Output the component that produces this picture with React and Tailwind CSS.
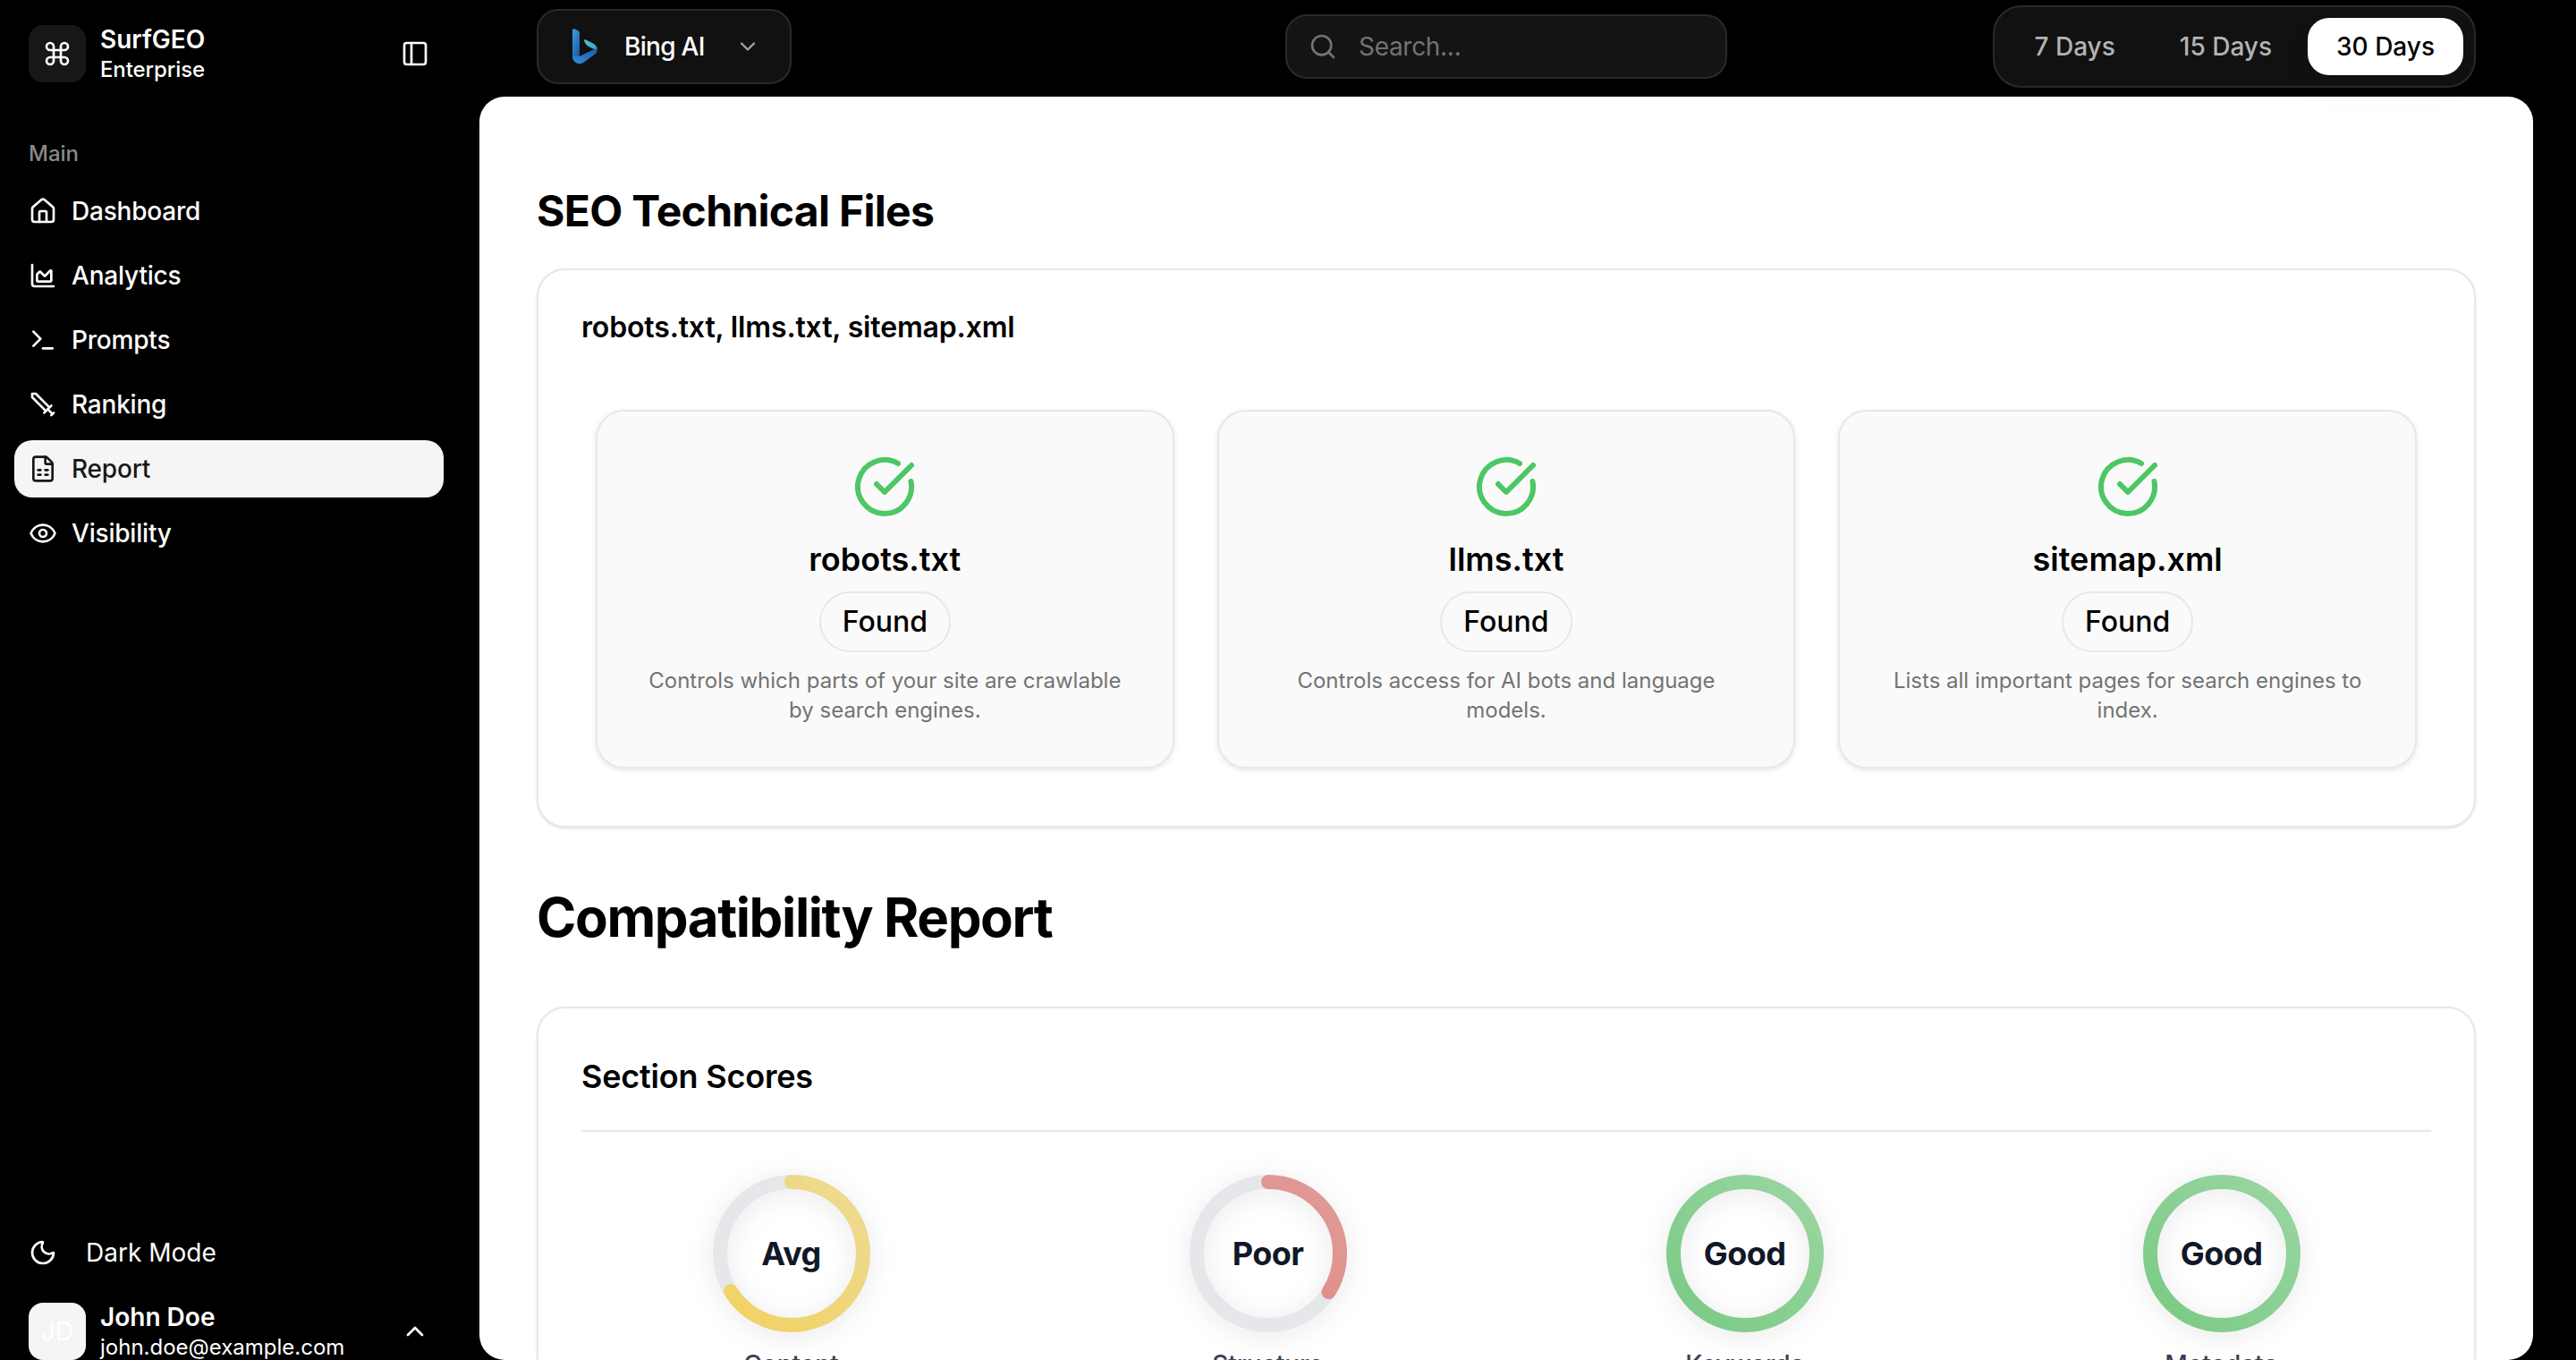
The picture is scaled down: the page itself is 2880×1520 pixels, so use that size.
import {
  Command,
  PanelLeft,
  House,
  ChartArea,
  Terminal,
  FileSpreadsheet,
  Eye,
  Moon,
  ChevronUp,
  ChevronDown,
  Search,
  CircleCheckBig,
} from "lucide-react";

function SwordIcon({ size = 32 }) {
  return (
    <svg width={size} height={size} viewBox="0 0 24 24" fill="none" stroke="currentColor" strokeWidth="2" strokeLinecap="round" strokeLinejoin="round">
      <polyline points="14.5 17.5 3 6 3 3 6 3 17.5 14.5" />
      <line x1="13" x2="19" y1="19" y2="13" />
      <line x1="16" x2="20" y1="16" y2="20" />
      <line x1="19" x2="21" y1="21" y2="19" />
    </svg>
  );
}

const navItems = [
  { label: "Dashboard", icon: House },
  { label: "Analytics", icon: ChartArea },
  { label: "Prompts", icon: Terminal },
  { label: "Ranking", icon: SwordIcon },
  { label: "Report", icon: FileSpreadsheet, active: true },
  { label: "Visibility", icon: Eye },
];

const files = [
  { name: "robots.txt", text: "Controls which parts of your site are crawlable by search engines." },
  { name: "llms.txt", text: "Controls access for AI bots and language models." },
  { name: "sitemap.xml", text: "Lists all important pages for search engines to index." },
];

const scores = [
  { id: "content", label: "Content", status: "Avg", pct: 66, from: "#eeda90", to: "#f1d264" },
  { id: "structure", label: "Structure", status: "Poor", pct: 34, from: "#e09a96", to: "#e08480" },
  { id: "keywords", label: "Keywords", status: "Good", pct: 100, from: "#98d5a0", to: "#7ccb86" },
  { id: "metadata", label: "Metadata", status: "Good", pct: 100, from: "#98d5a0", to: "#7ccb86" },
];

function BingLogo() {
  return (
    <svg width="28" height="40" viewBox="0 0 28 40">
      <defs>
        <linearGradient id="bingStem" x1="0" y1="0" x2="0.6" y2="1">
          <stop offset="0" stopColor="#37a0dc" />
          <stop offset="0.7" stopColor="#2a72bc" />
          <stop offset="1" stopColor="#1f5aa6" />
        </linearGradient>
        <linearGradient id="bingRibbon" x1="0" y1="1" x2="1" y2="0">
          <stop offset="0" stopColor="#2f8fd6" />
          <stop offset="1" stopColor="#1f5aa6" />
        </linearGradient>
        <linearGradient id="bingLobe" x1="0" y1="0" x2="1" y2="1">
          <stop offset="0" stopColor="#58c4c8" />
          <stop offset="1" stopColor="#2f9fd0" />
        </linearGradient>
      </defs>
      <path d="M13 13 C13 12 14 12 15 12.500 L23 16.500 C26.500 18.500 28 21 27.500 24.500 L19 20.500 C16 19 14 17 13 13 Z" fill="url(#bingLobe)" />
      <path d="M0 2 C0 0.500 1 0 2.500 0.500 L5.500 1.700 C7.200 2.400 8 3.500 8 5.200 L8 32 L0 33 Z" fill="url(#bingStem)" />
      <path d="M8 31 L24 23 C26 22 27.800 23 27.500 25 C27 27 26 28 24.500 29 L13 37.500 C8 41 2 38.500 0.500 34 C0 32.500 0 31 0 30 L8 31 Z" fill="url(#bingRibbon)" />
    </svg>
  );
}

function ScoreRing({ id, label, status, pct, from, to }) {
  const r = 80;
  const circ = 2 * Math.PI * r;
  return (
    <div className="flex flex-col items-center gap-4">
      <div className="relative w-[176px] h-[176px]">
        <div className="drop-shadow-[0_4px_14px_rgba(0,0,0,0.1)]">
          <svg width="176" height="176" viewBox="0 0 176 176" className="-rotate-90">
            <defs>
              <linearGradient id={id} gradientUnits="userSpaceOnUse" x1="20" y1="20" x2="156" y2="156">
                <stop offset="0" stopColor={to} />
                <stop offset="1" stopColor={from} />
              </linearGradient>
            </defs>
            <circle cx="88" cy="88" r={r} fill="none" stroke="#e5e7eb" strokeWidth="16" />
            <circle
              cx="88"
              cy="88"
              r={r}
              fill="none"
              stroke={`url(#${id})`}
              strokeWidth="16"
              strokeLinecap="round"
              strokeDasharray={`${(circ * pct) / 100} ${circ}`}
            />
          </svg>
        </div>
        <div className="absolute inset-0 flex items-center justify-center text-[36px] font-bold tracking-[-0.6px] text-[#111827]">
          {status}
        </div>
      </div>
      <div className="text-[28px] leading-10 font-medium text-[#374151]">{label}</div>
    </div>
  );
}

export default function App() {
  return (
    <div className="h-screen w-full flex bg-black overflow-hidden font-['Inter',sans-serif] text-white">
      {/* sidebar */}
      <aside className="w-[536px] shrink-0 flex flex-col pr-6">
        <div className="h-[92px] flex items-center justify-between pl-8 pr-8 pt-7">
          <div className="flex items-center gap-4">
            <div className="w-16 h-16 rounded-2xl bg-[#171717] flex items-center justify-center">
              <Command size={32} strokeWidth={2} />
            </div>
            <div className="flex flex-col">
              <span className="text-[28px] leading-[36px] font-semibold">SurfGEO</span>
              <span className="text-[24px] leading-[32px] font-medium tracking-[-0.1px]">Enterprise</span>
            </div>
          </div>
          <PanelLeft size={32} strokeWidth={2} />
        </div>

        <div className="mt-[64px] pl-8 text-[24px] leading-8 font-medium text-[#8a8a8a]">Main</div>

        <nav className="mt-[16px] flex flex-col gap-2 pl-4 pr-4">
          {navItems.map((item) => (
            <div
              key={item.label}
              className={`h-16 flex items-center gap-4 px-4 rounded-[20px] text-[28px] font-medium tracking-[-0.2px] ${
                item.active ? "bg-[#f5f5f5] text-[#171717]" : "text-white"
              }`}
            >
              <item.icon size={32} strokeWidth={2} />
              <span>{item.label}</span>
            </div>
          ))}
        </nav>

        <div className="mt-auto">
          <div className="h-16 flex items-center gap-8 pl-8 text-[28px]">
            <Moon size={32} strokeWidth={2} />
            <span>Dark Mode</span>
          </div>
          <div className="mt-6 flex items-center pl-8 pr-8 h-16">
            <div className="w-16 h-16 rounded-2xl bg-[#f5f5f5] flex items-center justify-center text-[28px] text-white">
              JD
            </div>
            <div className="ml-4 flex flex-col flex-1">
              <span className="text-[28px] leading-9 font-semibold">John Doe</span>
              <span className="text-[24px] leading-8">john.doe@example.com</span>
            </div>
            <ChevronUp size={32} strokeWidth={2} />
          </div>
        </div>
      </aside>

      {/* right side */}
      <div className="w-[2296px] shrink-0 flex flex-col h-full">
        <header className="h-[108px] shrink-0 px-16 grid grid-cols-3 items-start">
          <div className="pt-[10px]">
            <div className="inline-flex items-center h-[84px] w-[285px] pl-[38px] rounded-3xl bg-[#111111] border-2 border-[#2a2a2a]">
              <BingLogo />
              <span className="ml-[30px] text-[28px] font-medium tracking-[-0.7px]">Bing AI</span>
              <ChevronDown size={28} strokeWidth={2} className="ml-[34px] text-[#a3a3a3]" />
            </div>
          </div>
          <div className="pt-4 flex justify-center">
            <div className="flex items-center h-[72px] w-[494px] pl-6 rounded-3xl bg-[#141414] border-2 border-[#2a2a2a]">
              <Search size={32} strokeWidth={2} className="text-[#737373]" />
              <span className="ml-[24px] text-[28px] tracking-[-0.3px] text-[#737373]">Search...</span>
            </div>
          </div>
          <div className="pt-[6px] flex justify-end relative z-10">
            <div className="flex items-center gap-2 p-3 rounded-[32px] bg-[#111111] border-2 border-[#2a2a2a]">
              <div className="h-16 px-8 flex items-center rounded-3xl text-[28px] font-medium text-[#b3b3b3]">7 Days</div>
              <div className="h-16 px-8 flex items-center rounded-3xl text-[28px] font-medium text-[#b3b3b3]">15 Days</div>
              <div className="h-16 px-8 flex items-center rounded-3xl text-[28px] font-medium text-black bg-white shadow-[0_16px_32px_rgba(0,0,0,0.06)]">30 Days</div>
            </div>
          </div>
        </header>

        <main className="flex-1 min-h-0 overflow-hidden bg-white rounded-[28px] px-16 text-black">
          <h2 className="mt-[98px] text-[48px] leading-[60px] font-bold tracking-[-0.7px]">SEO Technical Files</h2>

          <section className="mt-[34px] rounded-[32px] border-2 border-[#e8e8e8] bg-white shadow-sm px-12 pt-[44px] pb-[64px]">
            <h3 className="text-[32px] leading-10 font-semibold tracking-[-0.15px]">robots.txt, llms.txt, sitemap.xml</h3>
            <div className="mt-[72px] px-4 grid grid-cols-3 gap-12">
              {files.map((f) => (
                <div
                  key={f.name}
                  className="flex flex-col items-center h-[401px] pt-[48px] px-12 rounded-[32px] bg-[#fafafa] border-2 border-[#e8e8e8] shadow-[0_2px_6px_rgba(0,0,0,0.1)]"
                >
                  <CircleCheckBig size={72} strokeWidth={2} className="text-[#4cc764]" />
                  <div className="mt-[21px] text-[36px] leading-[48px] font-semibold">{f.name}</div>
                  <div className="mt-3 h-[68px] px-6 flex items-center rounded-full border-2 border-[#e8e8e8] text-[32px] font-medium">
                    Found
                  </div>
                  <p className="mt-[15px] text-[24px] leading-[33px] text-center text-[#737373]">{f.text}</p>
                </div>
              ))}
            </div>
          </section>

          <h2 className="mt-[60px] text-[60px] leading-[80px] font-bold tracking-[-1.4px]">Compatibility Report</h2>

          <section className="mt-[60px] rounded-[32px] border-2 border-[#e8e8e8] bg-white shadow-sm px-12 pt-[52px]">
            <h3 className="text-[36px] leading-[48px] font-semibold tracking-[-0.2px]">Section Scores</h3>
            <div className="mt-[36px] h-[2px] bg-[#e5e7eb]" />
            <div className="mt-[48px] grid grid-cols-4 gap-16">
              {scores.map((s) => (
                <ScoreRing key={s.id} {...s} />
              ))}
            </div>
          </section>
        </main>
      </div>
    </div>
  );
}
